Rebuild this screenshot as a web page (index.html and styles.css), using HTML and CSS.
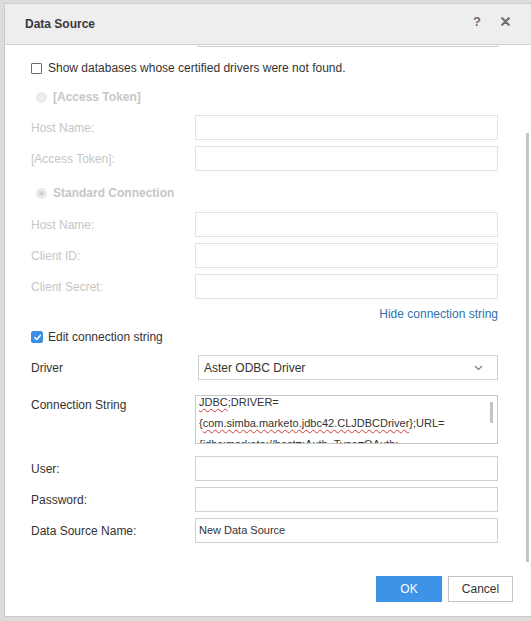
FILE: index.html
```html
<!DOCTYPE html>
<html>
<head>
<meta charset="utf-8">
<title>Data Source</title>
<link rel="stylesheet" href="styles.css">
</head>
<body>
<div class="screen">
  <div class="dialog">
    <div class="dlg-head">
      <span class="dlg-title">Data Source</span>
      <div class="dlg-tools">
        <span class="help">?</span>
        <svg class="close" width="9" height="9" viewBox="0 0 9 9"><path d="M1.2 1.2 L7.8 7.8 M7.8 1.2 L1.2 7.8" stroke="#707070" stroke-width="2.2" stroke-linecap="round"/></svg>
      </div>
    </div>
    <div class="dlg-body">
      <div class="form">
        <div class="row row-top"><span class="lbl"></span><div class="input shifted"></div></div>
        <div class="check-row m13"><span class="cbox"></span><span>Show databases whose certified drivers were not found.</span></div>
        <div class="radio-row disabled m13"><span class="radio"></span><span>[Access Token]</span></div>
        <div class="row disabled m10"><span class="lbl">Host Name:</span><div class="input"></div></div>
        <div class="row disabled m6"><span class="lbl">[Access Token]:</span><div class="input"></div></div>
        <div class="radio-row disabled m14"><span class="radio on"></span><span>Standard Connection</span></div>
        <div class="row disabled m11"><span class="lbl">Host Name:</span><div class="input"></div></div>
        <div class="row disabled m6"><span class="lbl">Client ID:</span><div class="input"></div></div>
        <div class="row disabled m6"><span class="lbl">Client Secret:</span><div class="input"></div></div>
        <div class="link-row m7"><a class="link">Hide connection string</a></div>
        <div class="check-row m7"><span class="cbox checked"><svg width="9" height="9" viewBox="0 0 9 9"><path d="M1.8 4.6 L3.8 6.5 L7.3 2.4" fill="none" stroke="#fff" stroke-width="1.5" stroke-linecap="round" stroke-linejoin="round"/></svg></span><span>Edit connection string</span></div>
        <div class="row m10"><span class="lbl">Driver</span>
          <div class="select shifted"><span>Aster ODBC Driver</span>
            <svg class="chev" width="9" height="6" viewBox="0 0 9 6"><path d="M1 1 L4.5 4.5 L8 1" fill="none" stroke="#777" stroke-width="1.1"/></svg>
          </div>
        </div>
        <div class="row row-text m15"><span class="lbl">Connection String</span>
          <div class="textarea">
            <div class="ta-text">
              <div><span class="sp">JDBC</span>;DRIVER=</div>
              <div>{<span class="sp">com.simba.marketo.jdbc42.CLJDBCDriver</span>};URL=</div>
              <div>{jdbc:marketo://host=;Auth_Type=OAuth;</div>
            </div>
            <div class="ta-thumb"></div>
          </div>
        </div>
        <div class="row m12"><span class="lbl">User:</span><div class="input"></div></div>
        <div class="row m6"><span class="lbl">Password:</span><div class="input"></div></div>
        <div class="row m6"><span class="lbl">Data Source Name:</span><div class="input"><span class="val">New Data Source</span></div></div>
      </div>
      <div class="scrollbar"></div>
    </div>
    <div class="dlg-foot">
      <button class="btn primary">OK</button>
      <button class="btn">Cancel</button>
    </div>
  </div>
</div>
</body>
</html>
```
FILE: styles.css
```css
html, body {
  margin: 0;
  padding: 0;
  overflow: hidden;
}
body {
  background: #dcdcdc;
  font-family: "Liberation Sans", Arial, sans-serif;
  font-size: 12px;
  color: #333;
}
.screen {
  width: 531px;
  height: 621px;
  padding: 3px 0 0 4px;
  box-sizing: border-box;
  overflow: hidden;
}
.dialog {
  width: 529px;
  height: 614px;
  box-sizing: border-box;
  border: 1px solid #cbcbcb;
  background: #fff;
  display: flex;
  flex-direction: column;
}
.dlg-head {
  height: 40px;
  flex: none;
  background: #eeeeee;
  border-bottom: 1px solid #d2d2d2;
  display: flex;
  align-items: center;
  justify-content: space-between;
  padding: 0 0 0 20px;
}
.dlg-title {
  font-weight: bold;
  font-size: 12px;
  color: #383838;
  margin-top: 0;
}
.dlg-tools {
  display: flex;
  align-items: center;
  gap: 20px;
  margin-right: 22px;
  margin-top: -5px;
}
.help {
  font-weight: bold;
  font-size: 13px;
  color: #707070;
}
.close {
  display: block;
}
.dlg-body {
  flex: none;
  height: 518px;
  position: relative;
  overflow: hidden;
}
.form {
  display: flex;
  flex-direction: column;
  padding-left: 26px;
}
.row {
  display: grid;
  grid-template-columns: 164px 303px;
  align-items: center;
  height: 25px;
}
.row-top {
  margin-top: -23px;
}
.m6 { margin-top: 6px; }
.m7 { margin-top: 7px; }
.m10 { margin-top: 10px; }
.m11 { margin-top: 11px; }
.m12 { margin-top: 12px; }
.m13 { margin-top: 13px; }
.m14 { margin-top: 14px; }
.m15 { margin-top: 15px; }
.lbl {
  white-space: nowrap;
}
.input, .select, .textarea {
  box-sizing: border-box;
  height: 25px;
  border: 1px solid #d0d0d0;
  background: #fff;
}
.disabled .input {
  border-color: #e3e3e3;
}
.disabled {
  color: #c6c6c6;
}
.shifted {
  margin-left: 3px;
  width: 300px;
}
.input .val {
  display: block;
  font-size: 11px;
  line-height: 23px;
  padding-left: 3px;
  color: #333;
}
.check-row, .radio-row {
  display: flex;
  align-items: center;
  height: 16px;
}
.cbox {
  width: 11px;
  height: 11px;
  box-sizing: border-box;
  border: 1px solid #6f6f6f;
  border-radius: 1px;
  margin-right: 6px;
  display: flex;
  align-items: center;
  justify-content: center;
  background: #fff;
}
.cbox.checked {
  background: #3a8fe4;
  border-color: #3a8fe4;
  width: 12px;
  height: 12px;
  border-radius: 2px;
  margin-right: 5px;
}
.radio-row {
  font-weight: bold;
  margin-left: 5px;
}
.radio {
  width: 11px;
  height: 11px;
  box-sizing: border-box;
  border-radius: 50%;
  background: #ececec;
  border: 1px solid #e6e6e6;
  margin-right: 6px;
  display: flex;
  align-items: center;
  justify-content: center;
}
.radio.on::after {
  content: "";
  width: 5px;
  height: 5px;
  border-radius: 50%;
  background: #d2d2d2;
}
.link-row {
  display: flex;
  justify-content: flex-end;
  width: 467px;
  height: 16px;
  align-items: center;
}
.link {
  color: #2f73ab;
  font-size: 12px;
}
.select {
  display: flex;
  align-items: center;
  justify-content: space-between;
  padding: 0 14px 0 5px;
  font-size: 12px;
  color: #333;
}
.chev { display: block; }
.row-text {
  height: 49px;
  align-items: start;
}
.row-text .lbl {
  line-height: 20px;
}
.textarea {
  height: 49px;
  position: relative;
  overflow: hidden;
  border-color: #c8c8c8;
}
.ta-text {
  margin-top: -4px;
  padding-left: 3px;
  font-size: 11px;
  line-height: 21px;
  color: #333;
  white-space: nowrap;
}
.sp {
  text-decoration: underline wavy #d23a3a;
  text-decoration-thickness: 1px;
  text-underline-offset: 2px;
}
.ta-thumb {
  position: absolute;
  right: 4px;
  top: 6px;
  width: 3px;
  height: 21px;
  background: #c4c4c4;
}
.scrollbar {
  position: absolute;
  right: 3px;
  top: 88px;
  width: 3px;
  height: 429px;
  background: #c3c3c3;
}
.dlg-foot {
  flex: 1;
  display: flex;
  justify-content: flex-end;
  align-items: flex-start;
  gap: 6px;
  padding: 13px 19px 0 0;
}
.btn {
  height: 26px;
  box-sizing: border-box;
  font-family: "Liberation Sans", Arial, sans-serif;
  font-size: 12px;
  border-radius: 0;
  cursor: pointer;
}
.btn.primary {
  width: 66px;
  background: #3d93e6;
  border: 1px solid #3d93e6;
  color: #fff;
}
.btn:not(.primary) {
  width: 65px;
  background: #fff;
  border: 1px solid #c4c4c4;
  color: #333;
}
```
